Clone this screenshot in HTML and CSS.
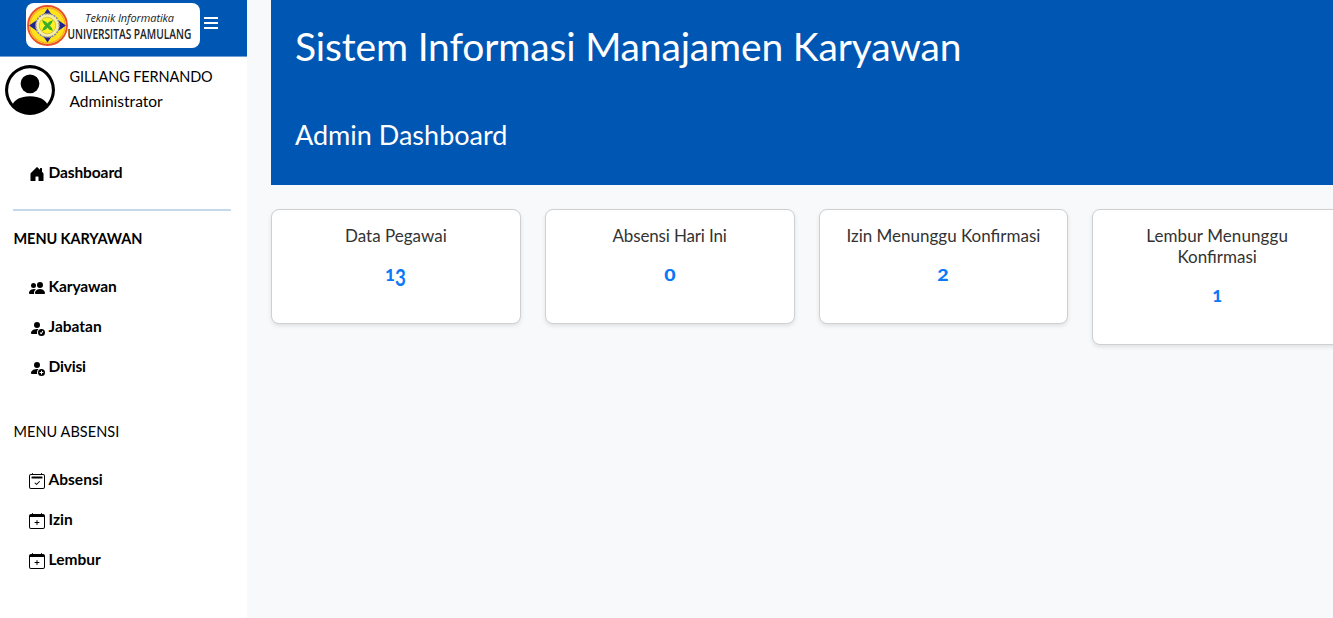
FILE: index.html
```html
<!DOCTYPE html>
<html lang="id">
<head>
<meta charset="utf-8">
<title>Admin Dashboard</title>
<link rel="stylesheet" href="styles.css">
</head>
<body>
<div class="app">
  <aside class="sidebar">
    <header class="brand">
      <div class="brand-card">
        <svg class="brand-seal" viewBox="0 0 40 40">
          <circle cx="20" cy="20" r="19" fill="#fff23a" stroke="#e8502c" stroke-width="1.8"/>
          <circle cx="20" cy="20" r="17.200" fill="#ffe21c" stroke="#f5a623" stroke-width="1"/>
          <path d="M20 3.500 25 11H15ZM20 36.500 15 29H25ZM2 20 10 14.500V25.500ZM38 20 30 25.500V14.500Z" fill="#20248f"/>
          <circle cx="20" cy="20" r="11.500" fill="#f6eda6" stroke="#85879f" stroke-width="1.500" stroke-dasharray="2 1"/>
          <circle cx="20" cy="20" r="8" fill="#fff21f" stroke="#d5b83c" stroke-width=".8"/>
          <path d="M15.500 15.500Q20 17 20 20Q20 17 24.500 15.500Q23 20 20 20Q23 20 24.500 24.500Q20 23 20 20Q20 23 15.500 24.500Q17 20 20 20Q17 20 15.500 15.500Z" fill="#38b52c" stroke="#38a52c"/>
        </svg>
        <div class="brand-text">
          <span class="brand-dept">Teknik Informatika</span>
          <span class="brand-name">UNIVERSITAS PAMULANG</span>
        </div>
      </div>
      <svg class="menu-toggle" viewBox="0 0 14 14"><path d="M0 2h14M0 7h14M0 12h14" stroke="#fff" stroke-width="2"/></svg>
    </header>

    <section class="profile">
      <svg class="avatar" viewBox="0 0 16 16"><path d="M11 6a3 3 0 1 1-6 0 3 3 0 0 1 6 0z"/><path fill-rule="evenodd" d="M0 8a8 8 0 1 1 16 0A8 8 0 0 1 0 8zm8-7a7 7 0 0 0-5.468 11.370C3.242 11.226 4.805 10 8 10s4.757 1.225 5.468 2.370A7 7 0 0 0 8 1z"/></svg>
      <div class="profile-text"><div><span class="t-name">GILLANG FERNANDO</span></div><div><span class="t-role">Administrator</span></div></div>
    </section>

    <nav class="nav">
      <a class="nav-item nav-home"><svg class="icon" viewBox="0 0 16 16"><path d="M6.500 14.500v-3.505c0-.245.25-.495.5-.495h2c.25 0 .5.25.5.5v3.500a.5.5 0 0 0 .5.5h4a.5.5 0 0 0 .5-.5v-7a.5.5 0 0 0-.146-.354L13 5.793V2.500a.5.5 0 0 0-.5-.5h-1a.5.5 0 0 0-.5.5v1.293L8.354 1.146a.5.5 0 0 0-.708 0l-6 6A.5.5 0 0 0 1.500 7.500v7a.5.5 0 0 0 .5.5h4a.5.5 0 0 0 .5-.5Z"/></svg><span class="t-dashboard">Dashboard</span></a>
      <hr class="divider">
      <h2 class="nav-title bold"><span class="t-menu-karyawan">MENU KARYAWAN</span></h2>
      <a class="nav-item"><svg class="icon" viewBox="0 0 16 16"><path d="M7 14s-1 0-1-1 1-4 5-4 5 3 5 4-1 1-1 1H7Zm4-6a3 3 0 1 0 0-6 3 3 0 0 0 0 6Zm-5.784 6A2.238 2.238 0 0 1 5 13c0-1.355.68-2.750 1.936-3.720A6.325 6.325 0 0 0 5 9c-4 0-5 3-5 4s1 1 1 1h4.216ZM4.500 8a2.500 2.500 0 1 0 0-5 2.500 2.500 0 0 0 0 5Z"/></svg><span class="t-karyawan">Karyawan</span></a>
      <a class="nav-item"><svg class="icon" viewBox="0 0 16 16"><path d="M12.500 16a3.500 3.500 0 1 0 0-7 3.500 3.500 0 0 0 0 7Zm1.679-4.493-1.335 2.226a.75.75 0 0 1-1.174.144l-.774-.773a.5.5 0 0 1 .708-.708l.547.548 1.170-1.951a.5.5 0 1 1 .858.514ZM11 5a3 3 0 1 1-6 0 3 3 0 0 1 6 0Z"/><path d="M2 13c0 1 1 1 1 1h5.256A4.493 4.493 0 0 1 8 12.500a4.490 4.490 0 0 1 1.544-3.393C9.077 9.038 8.564 9 8 9c-5 0-6 3-6 4Z"/></svg><span class="t-jabatan">Jabatan</span></a>
      <a class="nav-item"><svg class="icon" viewBox="0 0 16 16"><path d="M12.500 16a3.500 3.500 0 1 0 0-7 3.500 3.500 0 0 0 0 7Zm.5-5v1h1a.5.5 0 0 1 0 1h-1v1a.5.5 0 0 1-1 0v-1h-1a.5.5 0 0 1 0-1h1v-1a.5.5 0 0 1 1 0Zm-2-6a3 3 0 1 1-6 0 3 3 0 0 1 6 0Z"/><path d="M2 13c0 1 1 1 1 1h5.256A4.493 4.493 0 0 1 8 12.500a4.490 4.490 0 0 1 1.544-3.393C9.077 9.038 8.564 9 8 9c-5 0-6 3-6 4Z"/></svg><span class="t-divisi">Divisi</span></a>
      <h2 class="nav-title second"><span class="t-menu-absensi">MENU ABSENSI</span></h2>
      <a class="nav-item"><svg class="icon" viewBox="0 0 16 16"><path d="M10.854 8.146a.5.5 0 0 1 0 .708l-3 3a.5.5 0 0 1-.708 0l-1.500-1.500a.5.5 0 0 1 .708-.708L7.500 10.793l2.646-2.647a.5.5 0 0 1 .708 0z"/><path d="M3.500 0a.5.5 0 0 1 .5.5V1h8V.5a.5.5 0 0 1 1 0V1h1a2 2 0 0 1 2 2v11a2 2 0 0 1-2 2H2a2 2 0 0 1-2-2V3a2 2 0 0 1 2-2h1V.5a.5.5 0 0 1 .5-.5zM2 2a1 1 0 0 0-1 1v11a1 1 0 0 0 1 1h12a1 1 0 0 0 1-1V3a1 1 0 0 0-1-1H2z"/><path d="M2.500 4a.5.5 0 0 1 .5-.5h10a.5.5 0 0 1 .5.5v1a.5.5 0 0 1-.5.5H3a.5.5 0 0 1-.5-.5V4z"/></svg><span class="t-absensi">Absensi</span></a>
      <a class="nav-item"><svg class="icon" viewBox="0 0 16 16"><path d="M8 7a.5.5 0 0 1 .5.5V9H10a.5.5 0 0 1 0 1H8.500v1.500a.5.5 0 0 1-1 0V10H6a.5.5 0 0 1 0-1h1.500V7.500A.5.5 0 0 1 8 7z"/><path d="M3.500 0a.5.5 0 0 1 .5.5V1h8V.5a.5.5 0 0 1 1 0V1h1a2 2 0 0 1 2 2v11a2 2 0 0 1-2 2H2a2 2 0 0 1-2-2V3a2 2 0 0 1 2-2h1V.5a.5.5 0 0 1 .5-.5zM1 4v10a1 1 0 0 0 1 1h12a1 1 0 0 0 1-1V4H1z"/></svg><span class="t-izin">Izin</span></a>
      <a class="nav-item"><svg class="icon" viewBox="0 0 16 16"><path d="M8 7a.5.5 0 0 1 .5.5V9H10a.5.5 0 0 1 0 1H8.500v1.500a.5.5 0 0 1-1 0V10H6a.5.5 0 0 1 0-1h1.500V7.500A.5.5 0 0 1 8 7z"/><path d="M3.500 0a.5.5 0 0 1 .5.5V1h8V.5a.5.5 0 0 1 1 0V1h1a2 2 0 0 1 2 2v11a2 2 0 0 1-2 2H2a2 2 0 0 1-2-2V3a2 2 0 0 1 2-2h1V.5a.5.5 0 0 1 .5-.5zM1 4v10a1 1 0 0 0 1 1h12a1 1 0 0 0 1-1V4H1z"/></svg><span class="t-lembur">Lembur</span></a>
    </nav>
  </aside>

  <main class="main">
    <section class="hero">
      <h1 class="hero-title">Sistem Informasi Manajamen Karyawan</h1>
      <p class="hero-sub">Admin Dashboard</p>
    </section>
    <section class="cards">
      <article class="card"><h3 class="card-title"><span class="t-c1">Data Pegawai</span></h3><p class="card-value"><span class="num">1<span class="low">3</span></span></p></article>
      <article class="card"><h3 class="card-title"><span class="t-c2">Absensi Hari Ini</span></h3><p class="card-value"><span class="num wide">0</span></p></article>
      <article class="card"><h3 class="card-title"><span class="t-c3">Izin Menunggu Konfirmasi</span></h3><p class="card-value"><span class="num wide">2</span></p></article>
      <article class="card"><h3 class="card-title"><span class="t-c4">Lembur Menunggu</span><br><span class="t-c5">Konfirmasi</span></h3><p class="card-value"><span class="num">1</span></p></article>
    </section>
  </main>
</div>
</body>
</html>
```
FILE: styles.css
```css
* { box-sizing: border-box; }
body { margin: 0; background: #f8f9fa; color: #000; font-family: Lato, "Open Sans", sans-serif; overflow: hidden; }
h1, h2, h3, p { margin: 0; font-weight: 400; }

.app { display: flex; height: 618px; overflow: hidden; }

.sidebar { width: 247px; flex: none; background: #fff; }
.brand { display: flex; height: 57px; padding: 3px 0 0 26px; background: #0056b3; border-bottom: 1px solid #6f9fd2; }
.brand-card { display: flex; align-items: center; width: 174px; height: 45px; padding-left: 1px; background: #fff; border-radius: 8px; }
.brand-seal { width: 41px; height: 41px; flex: none; }
.brand-text { display: flex; flex-direction: column; align-items: center; width: 123px; padding-top: 1px; font-family: "Open Sans", sans-serif; white-space: nowrap; }
.brand-dept { font-size: 11px; line-height: 14px; font-style: italic; color: #222; letter-spacing: -.1px; }
.brand-name { font-size: 14px; line-height: 17px; font-weight: 600; color: #222; transform: scaleX(.725); }
.menu-toggle { width: 14px; height: 14px; margin: 13px 0 0 4px; }

.profile { display: flex; height: 58px; padding: 8px 0 0 5px; }
.avatar { width: 50px; height: 50px; flex: none; }
.profile-text { padding-left: 14.500px; font-size: 14.500px; line-height: 24px; }
.t-name { letter-spacing: -.12px; }
.t-role { font-size: 15.500px; }

.nav { padding-top: 37px; font-size: 15.500px; }
.nav-item { display: flex; align-items: center; height: 40px; padding-left: 29px; gap: 3.500px; font-weight: 700; }
.icon { width: 16px; height: 16px; margin-top: 4px; flex: none; }
.divider { height: 2px; margin: 17px 16px 0 13px; border: 0; background: #c5d9ec; }
.nav-title { height: 55px; padding: 16px 0 0 13.500px; font-size: 14.500px; line-height: 24px; }
.nav-title.bold { font-weight: 700; }
.nav-title.second { height: 73px; padding-top: 34px; }
.t-dashboard, .t-karyawan { letter-spacing: -.1px; }
.t-menu-karyawan { letter-spacing: -.08px; }
.t-divisi { letter-spacing: -.2px; }
.t-menu-absensi { letter-spacing: .05px; }

.main { flex: none; width: 1110px; padding-left: 24px; }
.hero { height: 185px; padding: 22px 24px 24px; background: #0056b3; color: #fff; }
.hero-title { font-size: 39px; line-height: 48px; letter-spacing: -.16px; }
.hero-sub { margin-top: 49px; font-size: 27px; line-height: 32px; }
.cards { display: grid; grid-template-columns: repeat(4, 249.750px); gap: 24px; align-items: start; margin-top: 24px; }
.card { padding: 15px 16px 32px; background: #fff; border: 1px solid #cfd0d1; border-radius: 8px; box-shadow: 0 2px 4px rgba(0, 0, 0, .1); text-align: center; }
.card-title { font-size: 17px; line-height: 21px; color: #333; white-space: nowrap; }
.t-c2 { letter-spacing: -.15px; }
.t-c4 { letter-spacing: .1px; }
.card-value { height: 32px; margin-top: 13px; font-size: 17px; line-height: 32px; font-weight: 900; color: #0b78f5; }
.num { display: inline-block; }
.num.wide { transform: scaleX(1.15); }
.low { display: inline-block; font-size: 22px; font-weight: 700; line-height: 20px; margin-left: -1px; transform: translateY(5px) scaleX(.85); }
```
